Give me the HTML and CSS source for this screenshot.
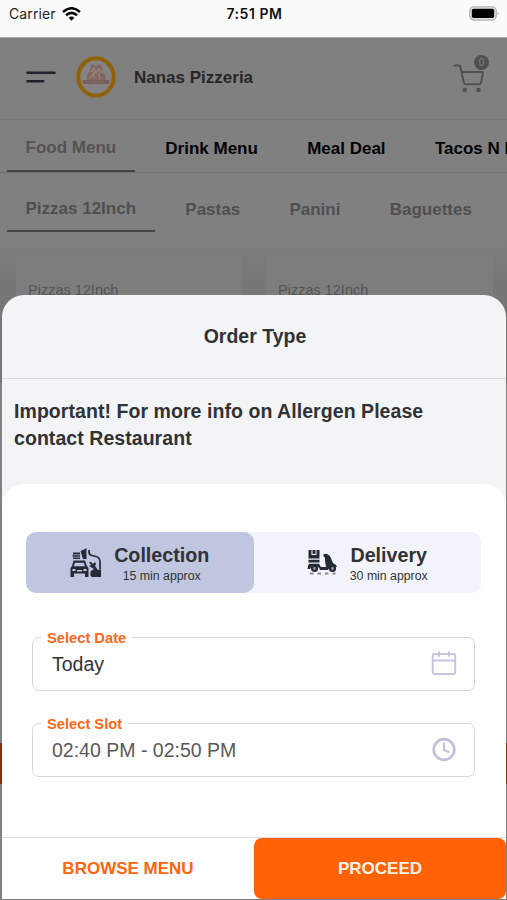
FILE: index.html
```html
<!DOCTYPE html>
<html lang="en">
<head>
<meta charset="utf-8">
<title>Nanas Pizzeria</title>
<link rel="stylesheet" href="styles.css">
</head>
<body>
<div class="phone">
  <header class="status">
    <div class="carrier">Carrier
      <svg width="19" height="14" viewBox="0 0 19 14"><path d="M1 5Q9.500-2.500 18 5M4 8.200Q9.500 3.500 15 8.200" fill="none" stroke="#090909" stroke-width="2.500"/><path d="M6.600 10.700Q9.500 8.200 12.400 10.700L9.500 13.700Z" fill="#090909"/></svg>
    </div>
    <time>7:51 PM</time>
    <svg class="battery" width="31" height="15" viewBox="0 0 31 15"><rect x=".8" y=".8" width="26.400" height="13.200" rx="4" fill="#e5e5e5" stroke="#b5b5b5" stroke-width="1.300"/><rect x="2.800" y="2.700" width="22.400" height="9.300" rx="1.700"/><path d="M28.500 5Q30.700 7.300 28.500 9.600Z" fill="#b5b5b5"/></svg>
  </header>
  <main class="shop">
    <div class="brand">
      <svg width="30" height="12" viewBox="0 0 30 12" stroke="#1f212f" stroke-width="2.600" stroke-linecap="round"><path d="M1.500 1.700H28.500M1.500 10.200H17.200"/></svg>
      <svg class="logo" width="40" height="42" viewBox="0 0 40 42"><ellipse cx="20" cy="21" rx="17.700" ry="18.700" fill="#858383" stroke="#916107" stroke-width="4"/><path d="M11 25Q10 17 14 15L15 9Q18 7 20 11Q23 6 26 10L26 16Q31 18 29 25Z" fill="#826762"/><path d="M15 16l3-4 2 5 3-4 3 4M14 22l3-4M23 17l1 6M18 15v7" fill="none" stroke="#978776" stroke-width="1.300"/><path d="M6.500 24H33.500V28H6.500Z" fill="#765e5a"/><path d="M11 26H29" stroke="#8a7872" stroke-dasharray="1.500 1"/></svg>
      <h1>Nanas Pizzeria</h1>
      <div class="cart">
        <svg width="32" height="32" viewBox="0 0 32 32"><path d="M1.500 2.500H7L11 20Q11.300 21.300 13 21.300H26Q27.500 21.300 28 20L30 9H8.500" fill="none" stroke="#505050" stroke-width="2" stroke-linecap="round" stroke-linejoin="round"/><circle cx="11.800" cy="27" r="2.300" fill="#505050"/><circle cx="25.500" cy="27" r="2.300" fill="#505050"/></svg>
        <span>0</span>
      </div>
    </div>
    <nav class="tabs menus"><span class="active">Food Menu</span><span>Drink Menu</span><span>Meal Deal</span><span>Tacos N Burritos</span></nav>
    <nav class="tabs sections"><span class="active">Pizzas 12Inch</span><span>Pastas</span><span>Panini</span><span>Baguettes</span></nav>
    <div class="cards"><article>Pizzas 12Inch</article><article>Pizzas 12Inch</article></div>
    <div class="basket"></div>
  </main>
  <section class="sheet">
    <h2>Order Type</h2>
    <p class="notice">Important! For more info on Allergen Please<br>contact Restaurant</p>
    <div class="panel">
      <div class="types">
        <div class="type chosen">
          <svg width="33" height="30" viewBox="0 0 33 30" fill="#262a36"><path d="M4 4.500H11V6.500H4ZM3.500 7.200H11V8.700H3.500ZM4 9.400H11V11H4ZM11.500 3L15 1.500 17.500 0V11H14Z"/><path d="M20 2V4Q20 7 23 7.500L27 8.500Q31 9.500 31 14V21" fill="none" stroke="#262a36" stroke-width="1.700"/><path fill-rule="evenodd" d="M4.500 12.500H16L18 18L19.500 20V29H16V25.500H5V29H1.500V20L3 18ZM6 14.700L4.800 18.200H16L14.700 14.700ZM3.500 21V23H6.500V21ZM14.500 21V23H17.500V21ZM8 22V23.500H13V22Z"/><path d="M20 14L22 14 24 16 26 14 27 16 26 18 29 22 32 21V29H23Q20 27 22 23L25 21 20 18 22 17Z"/></svg>
          <div><h3>Collection</h3><p>15 min approx</p></div>
        </div>
        <div class="type">
          <svg width="31" height="27" viewBox="0 0 31 27"><path fill="#262a36" d="M1.500 1H4.500V6H9.500V1H12.500V9.500H1.500ZM5.500 1H8.500V5H5.500ZM1.500 10.700H12.500V13.500H1.500ZM2 14.700H12L14 18H19L18 12V9L16.500 7V5H20L23 7 26 14 29 16 30 18H27Q22 18 21 21H13Q12 17 7.500 17Q4 17 3 20H.5Q.8 16 2 14.700Z"/><g fill="#92949d" stroke="#262a36" stroke-width="2.200"><circle cx="7.500" cy="19.500" r="2.500"/><circle cx="25.500" cy="19.500" r="2.500"/></g><path d="M3 24.500H28.500" stroke="#858893" stroke-width="1.800" stroke-dasharray="3.500 4"/></svg>
          <div><h3>Delivery</h3><p>30 min approx</p></div>
        </div>
      </div>
      <fieldset><legend>Select Date</legend><span>Today</span>
        <svg width="26" height="25" viewBox="0 0 26 25" fill="none" stroke="#c4c4de" stroke-width="1.900" stroke-linecap="round"><rect x="1.700" y="3" width="22.500" height="20" rx="2"/><path d="M2 9.500H24M8 1V5M18 1V5"/></svg>
      </fieldset>
      <fieldset class="slot"><legend>Select Slot</legend><span>02:40 PM - 02:50 PM</span>
        <svg width="26" height="25" viewBox="0 0 26 25" fill="none" stroke="#c0c1dc" stroke-width="2.700" stroke-linecap="round"><circle cx="13" cy="12.500" r="10.300"/><path d="M13 6.500V13L17.500 15" stroke-width="2.200"/></svg>
      </fieldset>
      <footer><button class="browse">BROWSE MENU</button><button class="proceed">PROCEED</button></footer>
    </div>
  </section>
</div>
</body>
</html>
```

FILE: styles.css
```css
* { box-sizing: border-box; }
body { margin: 0; font-family: "Liberation Sans", Arial, sans-serif; }
h1, h2, h3, p { margin: 0; }
svg { display: block; flex: none; }
.phone { position: relative; width: 507px; height: 900px; overflow: hidden; background: #808080; }
.status { height: 38px; padding: 0 7px 10px 9px; display: grid; grid-template-columns: 1fr auto 1fr; align-items: center; background: #fbfbfb; border-bottom: 1px solid #aaa; font: 14px Inter, sans-serif; color: #222; }
.carrier { display: flex; gap: 6px; align-items: center; letter-spacing: .1px; }
.status time { font-weight: 600; color: #111; letter-spacing: .55px; }
.battery { justify-self: end; }
.shop { height: 862px; display: flex; flex-direction: column; }
.brand { flex: none; height: 82px; display: flex; align-items: center; padding: 0 18px 3px 26px; border-bottom: 1px solid #757575; }
.logo { margin-left: 20px; }
h1 { margin: 2px 0 0 18px; font-size: 17px; line-height: 20px; color: #272727; }
.cart { position: relative; margin-left: auto; width: 36px; height: 38px; padding-top: 5px; }
.cart span { position: absolute; right: 0; top: -3px; width: 15px; height: 15px; border-radius: 50%; background: #505050; color: #808080; font-size: 10px; line-height: 16px; text-align: center; }
.tabs { flex: none; display: flex; padding-left: 7px; white-space: nowrap; font-size: 17px; font-weight: 700; overflow: hidden; }
.tabs span { flex: none; }
.menus { height: 53px; border-bottom: 1px solid #707070; color: #030303; gap: 49.300px; line-height: 58px; }
.menus .active { width: 128px; height: 52px; padding-left: 18.500px; margin-right: -19px; border-bottom: 2px solid #444; color: #535353; line-height: 56px; }
.sections { height: 60px; color: #4f4f4f; gap: 49.300px; line-height: 73px; }
.sections .active { width: 148px; height: 59px; padding-left: 18.500px; margin-right: -19px; border-bottom: 2px solid #444; line-height: 71px; }
.cards { flex: none; height: 150px; display: grid; grid-template-columns: 226px 227px; gap: 24px; padding: 21px 0 0 16px; background: linear-gradient(#808080, #777 45px); }
.cards article { padding: 27px 0 0 12px; background: #7d7d7d; border-radius: 4px 4px 0 0; font-size: 14.500px; line-height: 18px; color: #555; }
.basket { height: 41px; margin-top: 360px; flex: none; background: #803000; }
.sheet { position: absolute; top: 295px; left: 2px; width: 504px; height: 604px; background: #f3f4f6; border-radius: 22px 22px 0 0; overflow: hidden; color: #303236; }
h2 { height: 84px; padding-left: 2px; line-height: 83px; border-bottom: 1px solid #d9dadd; text-align: center; font-size: 19.500px; }
.notice { height: 105px; padding: 19px 12px 0; font-size: 19.500px; line-height: 27px; font-weight: 700; white-space: nowrap; letter-spacing: .06px; }
.panel { height: 415px; padding-top: 48px; background: #fff; border-radius: 22px 22px 0 0; }
.types { width: 455px; height: 61px; margin-left: 24px; display: grid; grid-template-columns: 1fr 1fr; border-radius: 10px; background: #f2f3fb; }
.type { display: flex; align-items: center; justify-content: center; gap: 12px; text-align: center; }
.type > div { margin-top: 3px; }
.chosen { background: #c0c6df; border-radius: 10px; }
.chosen > svg { margin: 1px 0 0 -1px; }
h3 { font-size: 19.700px; line-height: 23px; }
.type p { margin-top: 1px; font-size: 12.300px; line-height: 17px; }
fieldset { position: relative; width: 443px; height: 63px; margin: 35px 0 0 30px; padding: 0 16px 8px 19px; border: 1.500px solid #d8d8d8; border-radius: 7px; display: flex; align-items: center; justify-content: space-between; font-size: 19.500px; line-height: 23px; }
fieldset svg { margin: 0 1px 3px 0; }
legend { margin-left: -11px; padding: 1px 6px 0; color: #fc6818; font-size: 14.700px; line-height: 18px; font-weight: 700; }
.slot { margin-top: 23px; }
.slot span { color: #57585b; }
footer { height: 62px; margin-top: 60px; display: grid; grid-template-columns: 252px 252px; border-top: 1px solid #e1e1e1; }
button { border: 0; background: #fff; color: #fd6510; font: 700 17px "Liberation Sans", sans-serif; }
.proceed { background: #ff6106; color: #fff1e5; border-radius: 8px; }
```
